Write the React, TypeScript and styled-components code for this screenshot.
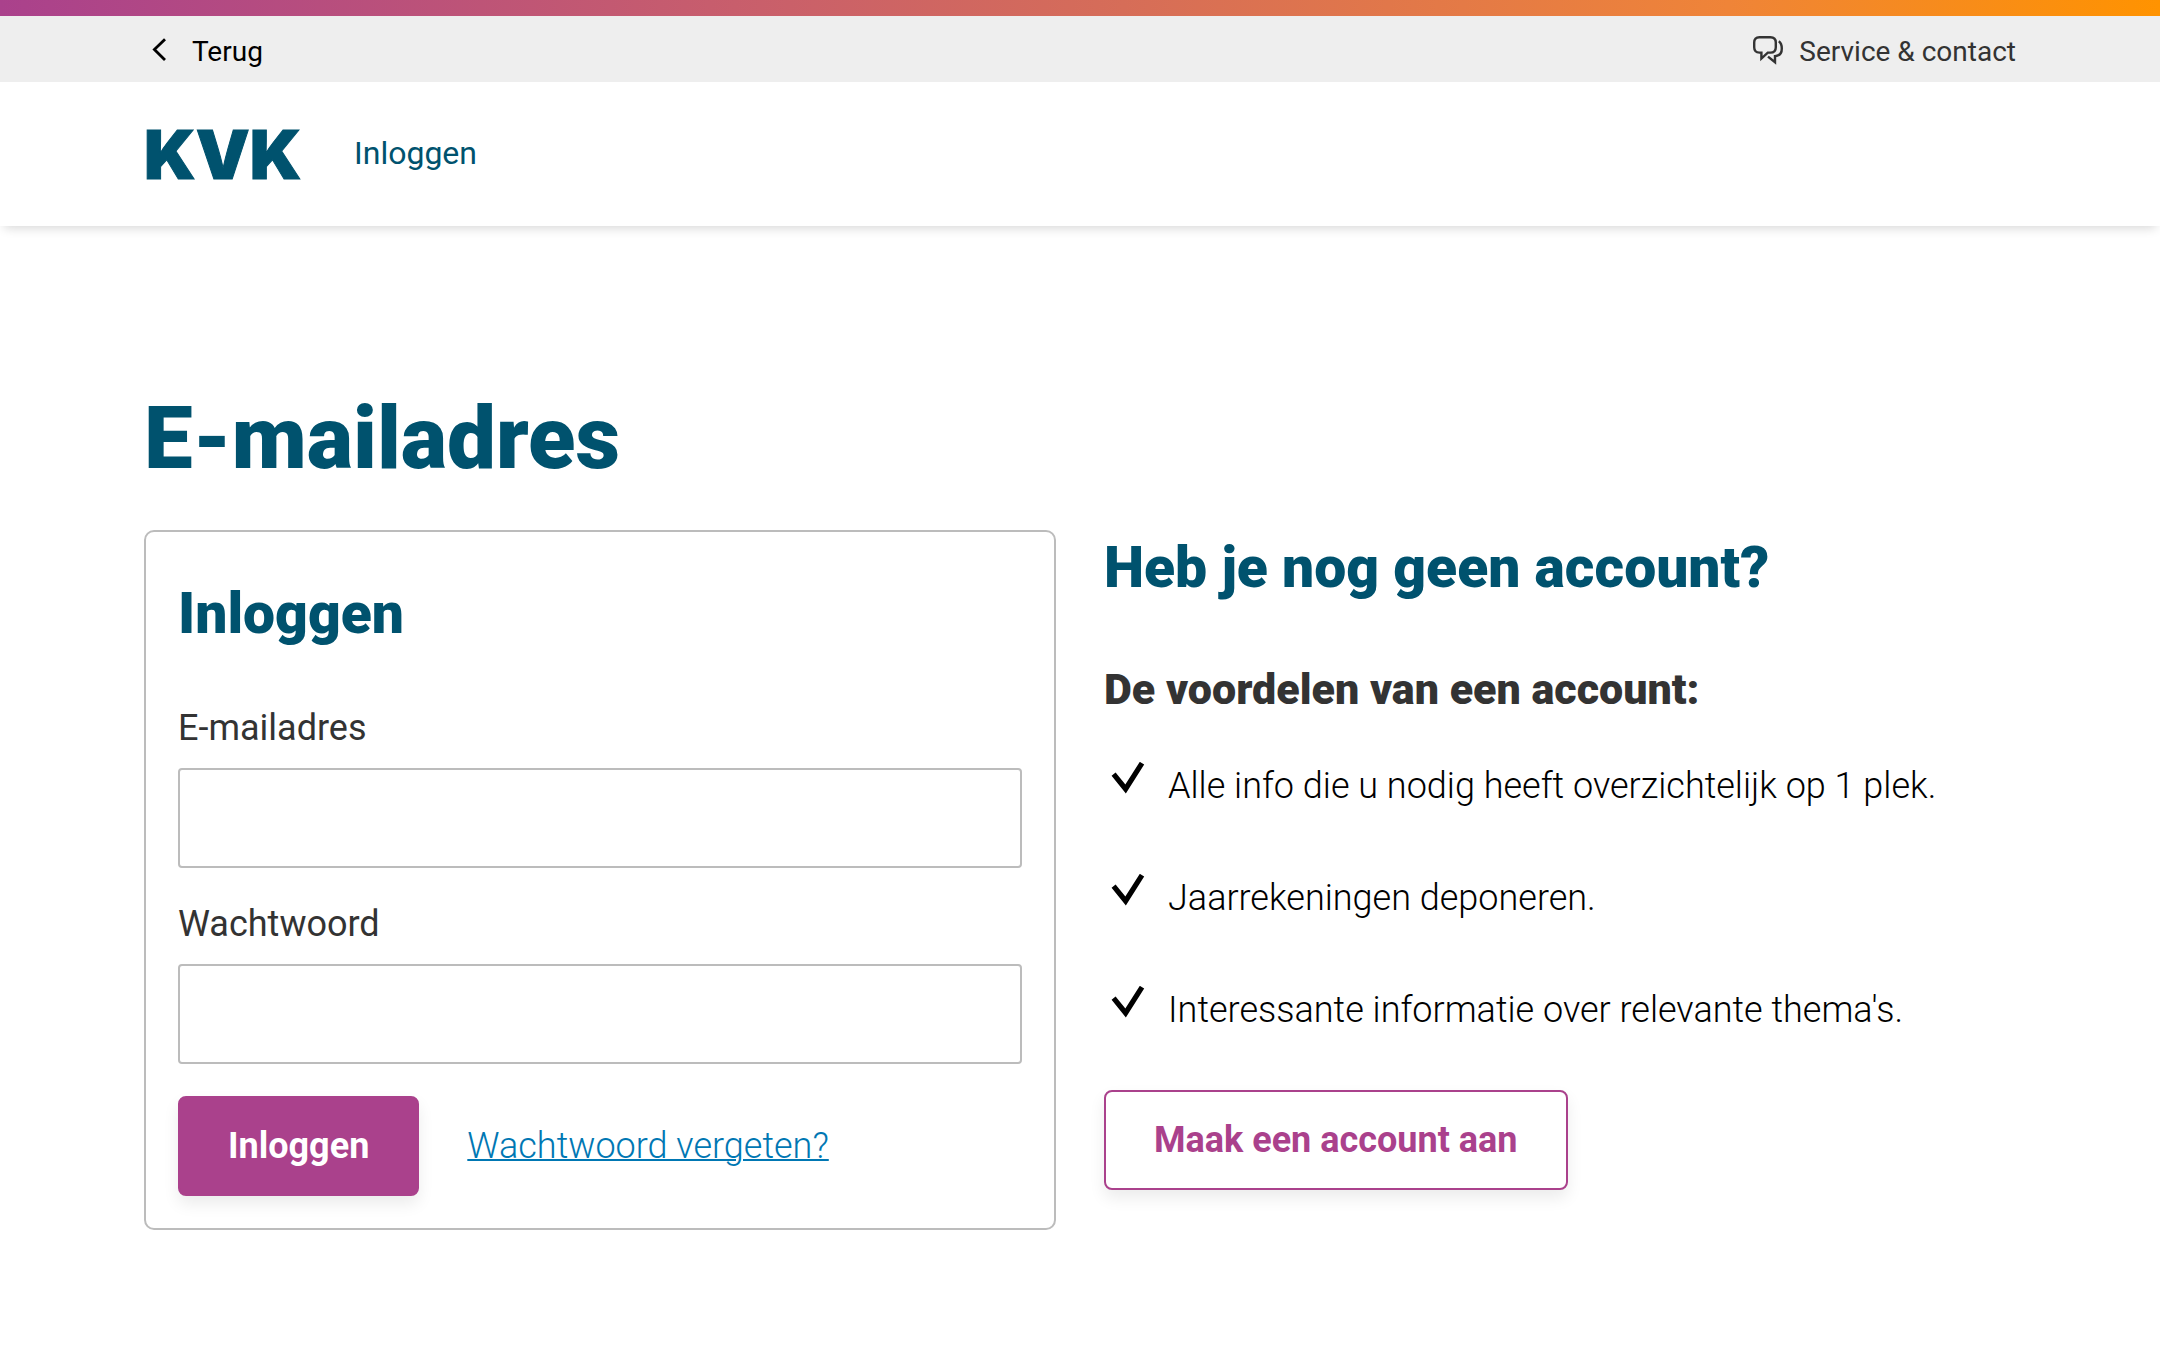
import React from "react";
import styled, { createGlobalStyle } from "styled-components";

const GlobalStyle = createGlobalStyle`
  *, *::before, *::after { box-sizing: border-box; }
  body {
    margin: 0;
    background: #fff;
    color: #333;
    font-family: Roboto, "Liberation Sans", sans-serif;
    font-size: 36px;
    line-height: 48px;
    -webkit-font-smoothing: antialiased;
  }
`;

const BrandStripe = styled.div`
  height: 16px;
  background: linear-gradient(90deg, #aa418c, #c85e6c 34%, #d66d58 52%, #ef8438 80%, #ff9300);
`;

const TopBar = styled.nav`
  display: flex;
  justify-content: space-between;
  align-items: center;
  height: 66px;
  padding: 6px 144px 0;
  background: #eee;
`;

const TopLink = styled.a<{ $color: string; $gap: number }>`
  display: flex;
  align-items: center;
  gap: ${(p) => p.$gap}px;
  color: ${(p) => p.$color};
  font-size: 28px;
  line-height: 32px;
  text-decoration: none;
`;

const Header = styled.header`
  display: flex;
  align-items: center;
  gap: 34px;
  height: 144px;
  padding: 0 144px;
  background: #fff;
  color: #00526e;
  box-shadow: 0 6px 10px -4px rgba(0, 0, 0, 0.16);
`;

const Logo = styled.a`
  min-width: 176px;
  color: inherit;
  font-family: Inter, sans-serif;
  font-size: 68px;
  font-weight: 900;
  font-kerning: none;
  line-height: 72px;
  text-decoration: none;
  -webkit-text-stroke: 1px currentColor;
`;

const HeaderTitle = styled.span`
  padding-bottom: 2px;
  font-size: 32px;
  line-height: 40px;
`;

const Main = styled.main`
  padding: 164px 144px 120px;
`;

const PageTitle = styled.h1`
  margin: 0 0 44px;
  color: #00526e;
  font-size: 87px;
  font-weight: 900;
  line-height: 96px;
`;

const Columns = styled.div`
  display: grid;
  grid-template-columns: 1fr 1fr;
  gap: 48px;
  align-items: start;
`;

const Card = styled.form`
  display: flex;
  flex-direction: column;
  gap: 32px;
  padding: 44px 32px 32px;
  border: 2px solid #bcbcbc;
  border-radius: 10px;
`;

const SectionTitle = styled.h2<{ $space: number }>`
  margin: 0 0 ${(p) => p.$space}px;
  color: #00526e;
  font-size: 57px;
  font-weight: 900;
  line-height: 76px;
`;

const SubTitle = styled.h3`
  margin: 0 0 46px;
  font-size: 43px;
  font-weight: 900;
  line-height: 54px;
`;

const Field = styled.div`
  display: flex;
  flex-direction: column;
  gap: 16px;
`;

const Input = styled.input`
  width: 100%;
  height: 100px;
  padding: 0 24px;
  border: 2px solid #bcbcbc;
  border-radius: 4px;
  background: #fff;
  color: #333;
  font: inherit;
  outline-color: #aa418c;
`;

const Actions = styled.div`
  display: flex;
  align-items: center;
  gap: 48px;
`;

const Button = styled.button<{ $outline?: boolean }>`
  height: 100px;
  padding: 0 48px;
  border: 2px solid #aa418c;
  border-radius: 8px;
  background: ${(p) => (p.$outline ? "#fff" : "#aa418c")};
  color: ${(p) => (p.$outline ? "#aa418c" : "#fff")};
  font: inherit;
  font-weight: 700;
  box-shadow: 0 8px 16px rgba(0, 0, 0, 0.08);
  cursor: pointer;
`;

const TextLink = styled.a`
  color: #0077b3;
  font-weight: 300;
  text-decoration-thickness: 2px;
`;

const Benefits = styled.ul`
  display: flex;
  flex-direction: column;
  gap: 64px;
  margin: 0 0 56px;
  padding: 0;
  list-style: none;
`;

const Benefit = styled.li`
  display: flex;
  gap: 16px;
  color: #000;
  font-weight: 300;

  svg { flex: none; }
`;

const ChevronIcon = () => (
  <svg width="32" height="32" viewBox="0 0 32 32" fill="none" stroke="currentColor" strokeWidth="2.8" aria-hidden="true">
    <path d="M21 3.2 10.4 13.6 21 24" />
  </svg>
);

const ChatIcon = () => (
  <svg width="32" height="32" viewBox="0 0 32 32" fill="none" stroke="currentColor" strokeWidth="2.4" aria-hidden="true">
    <path d="M6.4 1.2H17.4Q22.8 1.2 22.8 6.6V11.2Q22.8 16.6 17.4 16.6H14.8L8.4 22.6V16.6H6.4Q1.2 16.6 1.2 11.2V6.6Q1.2 1.2 6.4 1.2Z" />
    <path d="M25.8 5.2Q28.8 7.4 28.8 12.4Q28.8 19.8 22 20.2V26.2L15 20.6" />
  </svg>
);

const CheckIcon = () => (
  <svg width="48" height="48" viewBox="0 0 48 48" fill="none" stroke="currentColor" strokeWidth="5.2" aria-hidden="true">
    <path d="M9.6 12.2 21.6 27 38 1.2" />
  </svg>
);

const benefits = [
  "Alle info die u nodig heeft overzichtelijk op 1 plek.",
  "Jaarrekeningen deponeren.",
  "Interessante informatie over relevante thema's.",
];

export default function App() {
  return (
    <>
      <GlobalStyle />
      <BrandStripe />
      <TopBar>
        <TopLink href="#terug" $color="#000" $gap={16}>
          <ChevronIcon />
          Terug
        </TopLink>
        <TopLink href="#contact" $color="#333" $gap={14}>
          <ChatIcon />
          Service &amp; contact
        </TopLink>
      </TopBar>
      <Header>
        <Logo href="#home">KVK</Logo>
        <HeaderTitle>Inloggen</HeaderTitle>
      </Header>
      <Main>
        <PageTitle>E-mailadres</PageTitle>
        <Columns>
          <Card onSubmit={(e) => e.preventDefault()}>
            <SectionTitle $space={20}>Inloggen</SectionTitle>
            <Field>
              <label htmlFor="email">E-mailadres</label>
              <Input id="email" type="email" />
            </Field>
            <Field>
              <label htmlFor="password">Wachtwoord</label>
              <Input id="password" type="password" />
            </Field>
            <Actions>
              <Button type="submit">Inloggen</Button>
              <TextLink href="#vergeten">Wachtwoord vergeten?</TextLink>
            </Actions>
          </Card>
          <section>
            <SectionTitle $space={56}>Heb je nog geen account?</SectionTitle>
            <SubTitle>De voordelen van een account:</SubTitle>
            <Benefits>
              {benefits.map((text) => (
                <Benefit key={text}>
                  <CheckIcon />
                  {text}
                </Benefit>
              ))}
            </Benefits>
            <Button type="button" $outline>
              Maak een account aan
            </Button>
          </section>
        </Columns>
      </Main>
    </>
  );
}
